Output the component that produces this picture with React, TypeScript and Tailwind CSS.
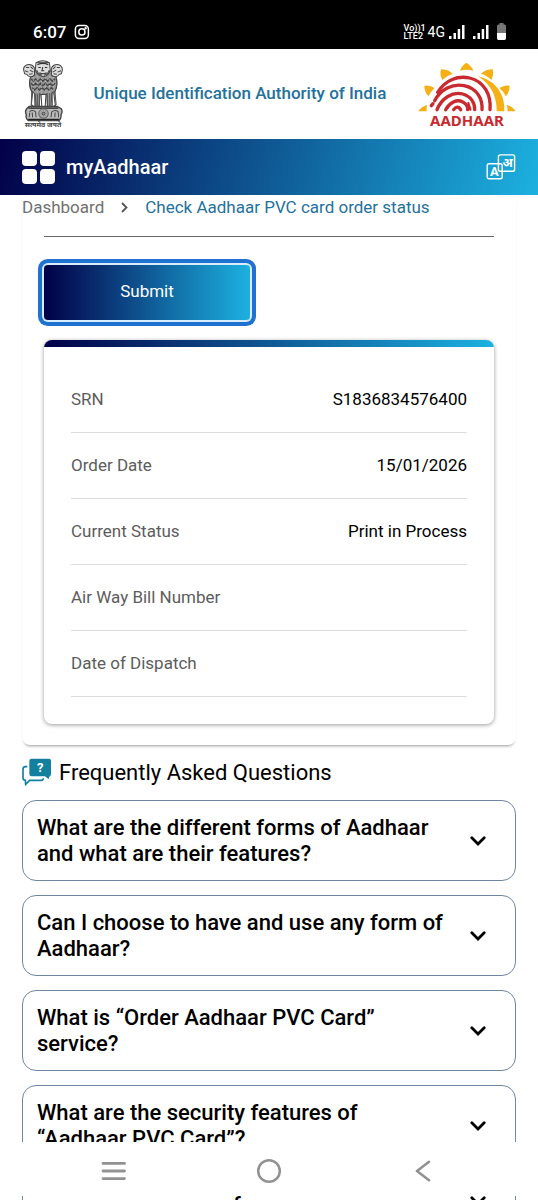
import React from "react";

const orderDetails = [
  { label: "SRN", value: "S1836834576400" },
  { label: "Order Date", value: "15/01/2026" },
  { label: "Current Status", value: "Print in Process" },
  { label: "Air Way Bill Number", value: "" },
  { label: "Date of Dispatch", value: "" },
];

const questions = [
  "What are the different forms of Aadhaar and what are their features?",
  "Can I choose to have and use any form of Aadhaar?",
  "What is “Order Aadhaar PVC Card” service?",
  "What are the security features of “Aadhaar PVC Card”?",
];

function SignalBars() {
  return (
    <svg className="h-4 w-4" viewBox="0 0 16 16" fill="#fff" aria-hidden="true">
      <rect x="0" y="12" width="2.5" height="3" />
      <rect x="4.5" y="9" width="2.5" height="6" />
      <rect x="8.7" y="5" width="2.5" height="10" />
      <rect x="13" y="1" width="2.5" height="14" />
    </svg>
  );
}

function StatusBar() {
  return (
    <div className="flex h-[49px] shrink-0 items-end justify-between bg-black pr-8 pb-[9px] pl-[33px] text-white">
      <div className="flex items-center gap-2">
        <span className="text-[17px] leading-4 font-medium">6:07</span>
        <svg className="h-4 w-4" viewBox="0 0 16 16" fill="none" stroke="#fff" strokeWidth="1.5" aria-hidden="true">
          <rect x="1.4" y="1.4" width="13" height="13" rx="3.6" />
          <circle cx="7.9" cy="7.9" r="3.1" />
          <circle cx="11.6" cy="4.2" r="0.5" fill="#fff" />
        </svg>
      </div>
      <div className="flex items-center">
        <div className="mr-1 w-5 text-[9px] leading-[8px] font-medium whitespace-nowrap">
          <div>Vo))1</div>
          <div>LTE2</div>
        </div>
        <span className="mr-1 text-sm leading-4">4G</span>
        <span className="mr-2"><SignalBars /></span>
        <span className="mr-2"><SignalBars /></span>
        <svg className="h-[17px] w-[9px]" viewBox="0 0 9 17" aria-hidden="true">
          <path d="M2.5 0H6.5V1.5H7.5Q9 1.5 9 3V10H0V3Q0 1.5 1.5 1.5H2.5Z" fill="#777" />
          <path d="M0 10H9V15Q9 17 7.5 17H1.5Q0 17 0 15Z" fill="#fff" />
        </svg>
      </div>
    </div>
  );
}

function Emblem() {
  return (
    <div className="flex w-10 flex-col items-center">
      <svg className="h-[62px] w-10" viewBox="42 28 117 184" preserveAspectRatio="none" fill="none" stroke="#444" strokeWidth="3" aria-hidden="true">
        <path d="M66 76Q58 92 63 112L70 126L66 166M138 76Q144 92 139 112L132 126L137 166" fill="#999" />
        <path d="M64 78L78 60H124L138 78Q145 98 136 120L126 128L124 166H114L112 130H92L89 166H77L76 128L66 118Q59 96 64 78Z" fill="#999" />
        <path d="M78 128L80 164M84 128L84 164M90 126L90 164M112 126L113 164M120 126L120 164M127 122L128 164" strokeWidth="3" stroke="#555" />
        <path d="M95 132L97 166H107L109 132" fill="#fff" />
        <path d="M68 120L66 160L73 166M135 120L139 160L131 166" stroke="#555" />
        <path d="M44 58Q42 47 54 42Q68 39 75 50L76 72Q68 82 57 75Q54 70 47 69Z" fill="#ddd" />
        <path d="M157 58Q158 47 147 42Q133 39 126 50L125 72Q133 82 144 75Q147 70 154 69Z" fill="#ddd" />
        <path d="M80 36Q100 25 119 36L122 58Q117 75 101 78Q84 74 78 58Z" fill="#ddd" />
        <path d="M84 36H116M84 42Q100 35 116 42M87 50H94M106 50H113M100 49L97 60H104M90 66Q100 72 111 66M82 58Q87 72 98 73M119 58Q114 72 103 73" stroke="#333" />
        <path d="M51 50H60M48 60L58 64M64 48L71 54M62 58L72 64M60 70L70 69M150 50H141M153 60L143 64M137 48L130 54M139 58L129 64M141 70L131 69" stroke="#444" />
        <path d="M66 84L72 91L79 84L86 91L93 84L100 91L107 84L114 91L121 84L128 91L136 84M66 97L72 104L79 97L86 104L93 97L100 104L107 97L114 104L121 97L128 104L136 97M69 110L76 117L83 110L90 117L97 110L104 117L111 110L118 117L125 110L132 117" strokeWidth="4" stroke="#444" />
        <path d="M72 78V120M84 76V125M96 80V128M108 80V128M120 76V125M131 78V118" stroke="#ccc" strokeWidth="2" strokeDasharray="4 5" />
        <path d="M60 166H142L154 173Q159 181 153 190Q155 200 147 208H58Q48 201 52 191Q46 180 54 171Z" fill="#bbb" strokeWidth="4" />
        <path d="M58 171H145M57 204H147" stroke="#222" strokeWidth="4" />
        <circle cx="102" cy="187" r="14" fill="#aaa" stroke="#666" />
        <circle cx="102" cy="187" r="4" fill="#ddd" />
        <path d="M102 174V200M89 187H115M93 178L111 196M111 178L93 196" stroke="#777" strokeWidth="1" />
        <path d="M61 181Q70 174 79 182L80 198M62 184L60 198M69 184L70 198M124 198L126 182Q135 174 145 181L146 198M136 184L135 198" stroke="#444" />
      </svg>
      <span className="text-[7px] leading-[7px] font-bold whitespace-nowrap text-[#444]">सत्यमेव जयते</span>
    </div>
  );
}

function AadhaarLogo() {
  return (
    <div className="flex w-[100px] flex-col items-center">
      <svg className="h-[51px] w-[100px]" viewBox="20 17 300 153" fill="none" aria-hidden="true">
        <g fill="#f5b016">
          <path d="M168 22Q184 32 189 46Q168 40 149 46Q153 32 168 22Z" />
          <path d="M92 42Q113 42 127 55Q110 60 96 74Q87 58 92 42Z" />
          <path d="M247 42Q251 58 243 74Q230 60 212 55Q226 42 247 42Z" />
          <path d="M42 91Q58 88 73 98Q61 109 54 123Q42 109 42 91Z" />
          <path d="M298 91Q298 109 287 123Q280 109 267 98Q282 88 298 91Z" />
          <path d="M24 168Q33 153 51 149Q47 159 49 168Z" />
          <path d="M316 168Q307 153 289 149Q293 159 291 168Z" />
          <path d="M202 62Q253 75 272 115Q283 137 282 168H259Q260 98 202 62Z" />
        </g>
        <g stroke="#c92a30" strokeWidth="10" strokeLinecap="round">
          <path d="M82 111C105 73 143 60 178 68C221 78 243 118 239 163" />
          <path d="M73 136C91 102 127 84 161 91C202 99 217 132 215 163" />
          <path d="M63 151L68 145" />
          <path d="M80 163C94 128 127 108 157 116C183 123 194 144 193 163" />
          <path d="M106 163C117 142 140 131 156 139C168 145 173 153 172 163" />
          <path d="M130 163C136 154 145 152 151 163" />
          <path d="M174 143L180 163" strokeWidth="7" />
        </g>
      </svg>
      <span className="font-['Noto_Sans',sans-serif] text-[15px] leading-4 font-bold text-[#c92a30]">AADHAAR</span>
    </div>
  );
}

function Chevron() {
  return (
    <svg className="h-[10px] w-4 shrink-0" viewBox="0 0 16 10" fill="none" stroke="#000" strokeWidth="2.8" strokeLinecap="round" aria-hidden="true">
      <path d="M1.8 1.8L8 8L14.2 1.8" />
    </svg>
  );
}

function AppHeader() {
  return (
    <div className="flex h-14 items-center justify-between bg-linear-[105deg,#020048,#1cb1e0] px-[22px] text-white">
      <div className="flex items-center gap-[11px]">
        <button type="button" aria-label="Menu" className="grid grid-cols-2 gap-[3px]">
          <span className="size-[15px] rounded bg-white" />
          <span className="size-[15px] rounded bg-white" />
          <span className="size-[15px] rounded bg-white" />
          <span className="size-[15px] rounded bg-white" />
        </button>
        <span className="text-xl font-medium">myAadhaar</span>
      </div>
      <button type="button" aria-label="Change language">
        <svg className="h-[27px] w-[30px]" viewBox="0 0 30 27" fill="none" stroke="#fff" strokeWidth="1.4" aria-hidden="true">
          <rect x="1.2" y="9.7" width="15" height="15" rx="1.8" />
          <rect x="12.4" y="0.9" width="16.2" height="16.4" rx="1.8" />
          <text x="8.4" y="21.8" fontSize="13" fontWeight="700" textAnchor="middle" fill="#fff" stroke="none">A</text>
          <text x="21.6" y="12.6" fontSize="12" fontWeight="700" textAnchor="middle" fill="#fff" stroke="none">अ</text>
        </svg>
      </button>
    </div>
  );
}

function FaqIcon() {
  return (
    <svg className="h-7 w-[30px]" viewBox="65 205 90 84" fill="none" aria-hidden="true">
      <path d="M94 207H146Q152 207 152 214V252Q152 260 146 262L145 269L134 260H94Q87 260 87 253V214Q87 207 94 207Z" fill="#1480a0" />
      <path d="M81 231H75Q68 231 68 239V265Q68 271 75 272L76 284L88 272H123Q129 272 129 266" stroke="#1480a0" strokeWidth="5" />
      <text x="120" y="246" fontSize="39" fontWeight="700" textAnchor="middle" fill="#fff">?</text>
    </svg>
  );
}

export default function App() {
  return (
    <div className="flex h-screen flex-col overflow-hidden bg-white font-[Roboto,'Noto_Sans',sans-serif] text-black">
      <StatusBar />
      <div className="min-h-0 flex-1 overflow-hidden">
        <header>
          <div className="flex h-[90px] items-center justify-between pr-[21px] pl-[23px]">
            <Emblem />
            <p className="text-[17px] font-medium text-[#24719c]">Unique Identification Authority of India</p>
            <AadhaarLogo />
          </div>
          <AppHeader />
        </header>

        <main className="px-[22px]">
          <section className="rounded-b-lg pb-[21px] shadow-[0_3px_3px_-2px_#999]">
            <nav aria-label="Breadcrumb" className="flex h-6 items-center text-[17px] leading-6">
              <a href="#dashboard" className="text-[#707070]">Dashboard</a>
              <svg className="mx-[17px] h-[11px] w-[7px]" viewBox="0 0 7 11" fill="none" stroke="#555" strokeWidth="1.8" aria-hidden="true">
                <path d="M1 1L5.5 5.5L1 10" />
              </svg>
              <a href="#status" aria-current="page" className="text-[#24719c]">Check Aadhaar PVC card order status</a>
            </nav>
            <div className="px-[22px] pt-[17px]">
              <hr className="border-[#666]" />
              <button
                type="button"
                className="mt-7 h-[55px] w-[206px] rounded bg-linear-[90deg,#020048,#1cb1e0] pb-0.5 text-[17px] text-white shadow-[0_0_0_2px_#d9ecfc,0_0_0_6px_#1f72cf]"
              >
                Submit
              </button>
              <div className="mt-5 overflow-hidden rounded-lg shadow-[0_1px_4px_#999]">
                <div className="h-[7px] bg-linear-[90deg,#020048,#1cb1e0]" />
                <div className="px-[27px] pt-[19px] pb-[27px]">
                  <table className="w-full text-[17px] leading-6">
                    <tbody>
                      {orderDetails.map((detail) => (
                        <tr key={detail.label} className="h-[66px] border-b border-[#ddd]">
                          <th scope="row" className="text-left font-normal text-[#5c5c5c]">{detail.label}</th>
                          <td className="text-right">{detail.value}</td>
                        </tr>
                      ))}
                    </tbody>
                  </table>
                </div>
              </div>
            </div>
          </section>

          <section>
            <h2 className="flex h-[55px] items-center gap-[7px] text-[22px]">
              <FaqIcon />
              Frequently Asked Questions
            </h2>
            <div className="flex flex-col gap-[14px]">
              {questions.map((question) => (
                <h3 key={question}>
                  <button
                    type="button"
                    aria-expanded="false"
                    className="flex h-[81px] w-full items-center justify-between rounded-[14px] border border-[#7186a0] pt-px pr-[29px] pl-[14px] text-left text-[22px] leading-[26px] font-medium"
                  >
                    <span className="w-[410px]">{question}</span>
                    <Chevron />
                  </button>
                </h3>
              ))}
            </div>
          </section>
        </main>
      </div>

      <div className="flex h-[54px] shrink-0 items-center justify-between px-[101px] pt-1 text-[#929292]">
        <button type="button" aria-label="Recent apps">
          <svg className="h-[22px] w-[26px]" viewBox="0 0 26 22" stroke="currentColor" strokeWidth="2.8" strokeLinecap="round" aria-hidden="true">
            <path d="M2 3.4H23.5M2 11H23.5M2 18.6H23.5" />
          </svg>
        </button>
        <button type="button" aria-label="Home">
          <svg className="size-[26px]" viewBox="0 0 26 26" fill="none" stroke="currentColor" strokeWidth="2.5" aria-hidden="true">
            <circle cx="13" cy="13" r="10.8" />
          </svg>
        </button>
        <button type="button" aria-label="Back">
          <svg className="h-[22px] w-[26px]" viewBox="0 0 26 22" fill="none" stroke="currentColor" strokeWidth="2.6" strokeLinecap="round" strokeLinejoin="round" aria-hidden="true">
            <path d="M18 1.8L6 11L18 20.2" />
          </svg>
        </button>
      </div>
      <div className="h-1 shrink-0 overflow-hidden px-[22px]">
        <div className="flex items-start justify-between border-x border-[#7186a0] pr-[29px] pl-[210px]">
          <span className="text-[22px] leading-[18px] font-medium">f</span>
          <Chevron />
        </div>
      </div>
    </div>
  );
}
